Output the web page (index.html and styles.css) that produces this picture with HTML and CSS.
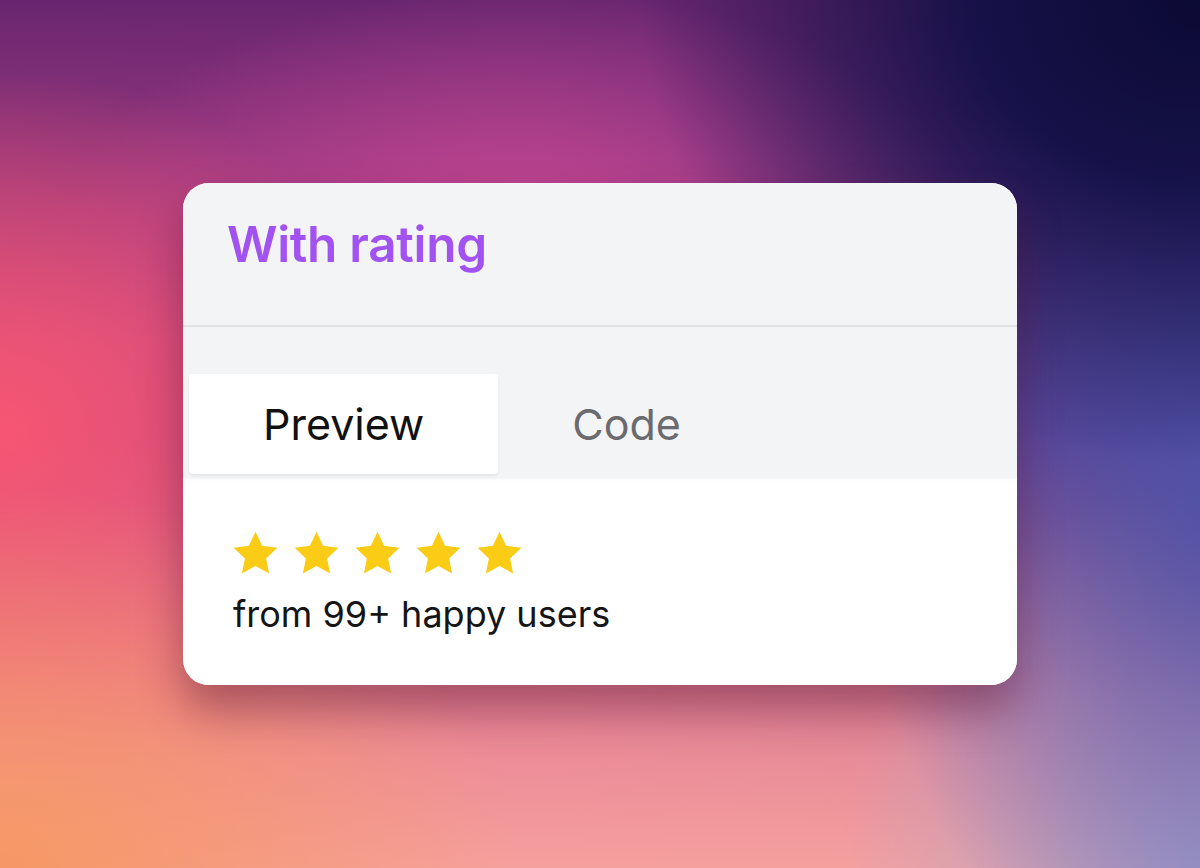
FILE: index.html
```html
<!DOCTYPE html>
<html>
<head>
<meta charset="utf-8">
<link rel="stylesheet" href="styles.css">
</head>
<body>
<div class="stage">
  <div class="card">
    <div class="card-head">
      <h1 class="title">With rating</h1>
    </div>
    <div class="tabs">
      <div class="tab tab-active">Preview</div>
      <div class="tab">Code</div>
    </div>
    <div class="content">
      <div class="stars">
        <svg class="star" viewBox="0 0 24 24"><path d="M12 1.8l3.1 6.6 7.2.9-5.3 5 1.4 7.1L12 17.9l-6.4 3.5 1.4-7.1-5.3-5 7.2-.9z"/></svg>
        <svg class="star" viewBox="0 0 24 24"><path d="M12 1.8l3.1 6.6 7.2.9-5.3 5 1.4 7.1L12 17.9l-6.4 3.5 1.4-7.1-5.3-5 7.2-.9z"/></svg>
        <svg class="star" viewBox="0 0 24 24"><path d="M12 1.8l3.1 6.6 7.2.9-5.3 5 1.4 7.1L12 17.9l-6.4 3.5 1.4-7.1-5.3-5 7.2-.9z"/></svg>
        <svg class="star" viewBox="0 0 24 24"><path d="M12 1.8l3.1 6.6 7.2.9-5.3 5 1.4 7.1L12 17.9l-6.4 3.5 1.4-7.1-5.3-5 7.2-.9z"/></svg>
        <svg class="star" viewBox="0 0 24 24"><path d="M12 1.8l3.1 6.6 7.2.9-5.3 5 1.4 7.1L12 17.9l-6.4 3.5 1.4-7.1-5.3-5 7.2-.9z"/></svg>
      </div>
      <p class="caption">from 99+ happy users</p>
    </div>
  </div>
</div>
</body>
</html>
```
FILE: styles.css
```css
html, body {
  margin: 0;
  padding: 0;
}
body {
  width: 1200px;
  height: 868px;
  overflow: hidden;
  font-family: Inter, "Noto Sans", sans-serif;
  background-color: #b84a8a;
  background-image:
    radial-gradient(ellipse 560px 460px at 1200px 0px, #0b0a33 0%, rgba(18,16,70,0.95) 40%, rgba(30,25,90,0) 100%),
    radial-gradient(ellipse 360px 520px at 1220px 500px, rgba(80,82,168,0.95) 0%, rgba(80,70,160,0) 100%),
    radial-gradient(ellipse 360px 380px at 1200px 868px, rgba(172,164,205,1) 0%, rgba(170,150,210,0) 100%),
    radial-gradient(ellipse 520px 380px at 0px 868px, rgba(246,152,100,1) 0%, rgba(246,150,100,0) 100%),
    radial-gradient(ellipse 420px 360px at 0px 430px, rgba(246,86,114,1) 0%, rgba(240,85,115,0) 100%),
    linear-gradient(180deg, rgba(240,150,150,0) 50%, rgba(240,140,150,0.85) 80%, rgba(246,160,158,1) 100%),
    radial-gradient(ellipse 460px 240px at 520px 230px, rgba(196,70,146,1) 0%, rgba(185,65,145,0) 100%),
    linear-gradient(180deg, rgba(105,38,112,1) 0%, rgba(110,40,118,0.6) 18%, rgba(110,40,118,0) 40%),
    linear-gradient(90deg, #c84a80 0%, #b9468c 45%, #6a3c8e 80%, #4a3c8c 100%);
}
.stage {
  height: 868px;
  display: flex;
  align-items: center;
  justify-content: center;
}
.card {
  width: 834px;
  height: 502px;
  border-radius: 26px;
  overflow: hidden;
  background: #ffffff;
  display: flex;
  flex-direction: column;
  box-shadow: 0 26px 44px rgba(80, 15, 45, 0.42);
}
.card-head {
  background: #f3f4f6;
  border-bottom: 2px solid #e2e3e7;
  padding: 0 44px;
  box-sizing: border-box;
  height: 144px;
}
.title {
  margin: 0;
  padding-top: 29px;
  font-size: 49.5px;
  line-height: 64px;
  font-weight: 600;
  color: #a352f2;
  letter-spacing: -0.3px;
}
.tabs {
  height: 151px;
  background: #f3f4f6;
  display: flex;
  align-items: flex-end;
  padding: 0 6px 4px;
  box-sizing: border-box;
  box-shadow: 0 1px 3px rgba(0,0,0,0.05);
  position: relative;
}
.tab {
  height: 100px;
  padding: 0 74px;
  display: flex;
  align-items: center;
  font-size: 43px;
  color: #6b6b6f;
  font-weight: 400;
}
.tab-active {
  background: #ffffff;
  color: #111111;
  border-radius: 4px;
  box-shadow: 0 2px 3px rgba(0,0,0,0.06);
}
.content {
  flex: 1;
  padding: 50px 50px 0;
  background: #ffffff;
}
.stars {
  display: flex;
  gap: 10px;
  height: 51px;
  margin-left: -3px;
}
.star {
  width: 51px;
  height: 51px;
  fill: #facc15;
}
.caption {
  margin: 11px 0 0;
  font-size: 36px;
  line-height: 48px;
  color: #151515;
}
```
